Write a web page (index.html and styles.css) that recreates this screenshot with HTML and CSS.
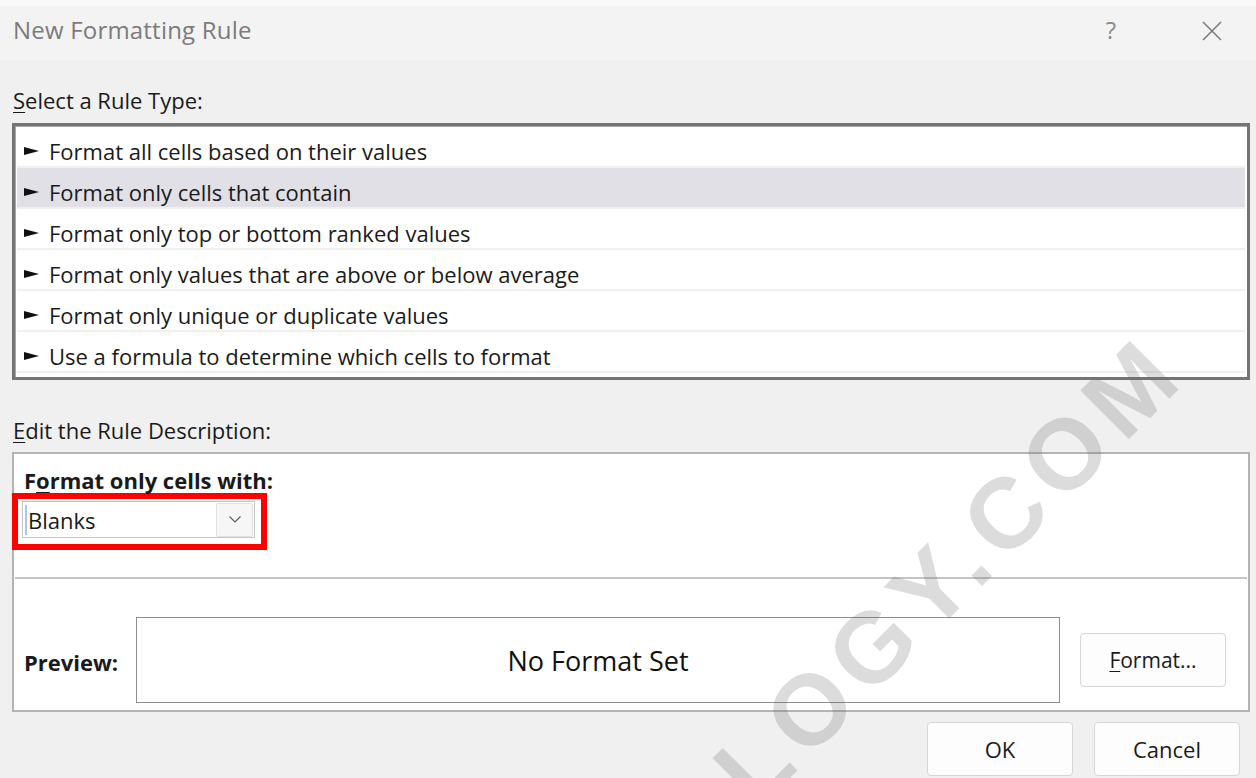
FILE: index.html
```html
<!DOCTYPE html>
<html lang="en">
<head>
<meta charset="utf-8">
<title>New Formatting Rule</title>
<link rel="stylesheet" href="styles.css">
</head>
<body>
<div class="dialog">
  <header class="titlebar">
    <span class="title">New Formatting Rule</span>
    <span class="help">?</span>
    <svg class="close" width="20" height="20" viewBox="0 0 20 20" aria-label="Close">
      <path d="M1 1 L19 19 M19 1 L1 19" stroke="#7d7d7d" stroke-width="1.6" fill="none"/>
    </svg>
  </header>

  <main class="content">
    <div class="section-label"><u>S</u>elect a Rule Type:</div>
    <ul class="rule-list">
      <li class="rule"><svg class="bullet" width="15" height="10" viewBox="0 0 15 10"><polygon points="0,1 15,5 0,9" fill="#111"/></svg><span>Format all cells based on their values</span></li>
      <li class="rule is-selected"><svg class="bullet" width="15" height="10" viewBox="0 0 15 10"><polygon points="0,1 15,5 0,9" fill="#111"/></svg><span>Format only cells that contain</span></li>
      <li class="rule"><svg class="bullet" width="15" height="10" viewBox="0 0 15 10"><polygon points="0,1 15,5 0,9" fill="#111"/></svg><span>Format only top or bottom ranked values</span></li>
      <li class="rule"><svg class="bullet" width="15" height="10" viewBox="0 0 15 10"><polygon points="0,1 15,5 0,9" fill="#111"/></svg><span>Format only values that are above or below average</span></li>
      <li class="rule"><svg class="bullet" width="15" height="10" viewBox="0 0 15 10"><polygon points="0,1 15,5 0,9" fill="#111"/></svg><span>Format only unique or duplicate values</span></li>
      <li class="rule"><svg class="bullet" width="15" height="10" viewBox="0 0 15 10"><polygon points="0,1 15,5 0,9" fill="#111"/></svg><span>Use a formula to determine which cells to format</span></li>
    </ul>

    <div class="section-label section-label--gap"><u>E</u>dit the Rule Description:</div>
    <section class="desc">
      <div class="desc-heading">F<u>o</u>rmat only cells with:</div>
      <div class="highlight">
        <div class="combo">
          <span class="caret"></span>
          <span class="combo-value">Blanks</span>
          <span class="combo-button">
            <svg width="12" height="7" viewBox="0 0 12 7"><polyline points="0.5,0.5 6,6 11.5,0.5" fill="none" stroke="#5a5a5a" stroke-width="1.1"/></svg>
          </span>
        </div>
      </div>
      <div class="separator"></div>
      <div class="preview-row">
        <span class="preview-label">Preview:</span>
        <div class="preview-box">No Format Set</div>
        <button class="btn btn-format" type="button"><u>F</u>ormat...</button>
      </div>
    </section>

    <div class="actions">
      <button class="btn" type="button">OK</button>
      <button class="btn" type="button">Cancel</button>
    </div>
  </main>

  <div class="watermark" aria-hidden="true">LOGY.COM</div>
</div>
</body>
</html>
```

FILE: styles.css
```css
html, body {
  margin: 0;
  padding: 0;
}

body {
  width: 1256px;
  height: 778px;
  overflow: hidden;
  background: #f0f0f0;
  color: #1a1a1a;
  font-family: "Open Sans", "Noto Sans", sans-serif;
  font-stretch: 88%;
  font-size: 22px;
}

.dialog {
  position: relative;
  width: 1256px;
  height: 778px;
  overflow: hidden;
}

/* Title bar */
.titlebar {
  box-sizing: border-box;
  height: 60px;
  border-top: 6px solid #fafafa;
  background: #f3f3f3;
  display: flex;
  align-items: center;
  padding: 0 34px 7px 13px;
}

.title {
  flex: 1;
  font-size: 24px;
  letter-spacing: 0.2px;
  color: #7b7b7b;
}

.help {
  font-size: 24px;
  color: #8a8a8a;
  margin-right: 86px;
}

.close {
  display: block;
  margin-top: 2px;
}

/* Body */
.content {
  padding: 0 6px 0 12px;
}

.section-label {
  line-height: 28px;
  margin-top: 26px;
  padding-left: 1px;
}

.section-label--gap {
  margin-top: 36px;
}

u {
  text-decoration-thickness: 1px;
  text-underline-offset: 3px;
}

/* Rule type list */
.rule-list {
  list-style: none;
  margin: 9px 0 0;
  padding: 1px 2px 4px;
  border: 3px solid #747474;
  box-shadow: inset 1px 1px 0 #a8a8a8;
  background: #fff;
}

.rule {
  box-sizing: border-box;
  height: 41px;
  padding: 8px 0 0 7px;
  border-bottom: 2px solid #f0f0f0;
  display: flex;
  align-items: center;
  gap: 10px;
}

.rule.is-selected {
  background: #e0e0e6;
}

.bullet {
  flex: none;
  display: block;
}

/* Rule description */
.desc {
  box-sizing: border-box;
  height: 260px;
  margin-top: 8px;
  border: 2px solid #b3b3b3;
  background: #fff;
  padding-top: 12px;
}

.desc-heading {
  font-weight: 700;
  line-height: 28px;
  padding-left: 10px;
}

.highlight {
  width: fit-content;
  margin: -1px 0 0 -2px;
  padding: 2px 6px 6px 4px;
  border: 6px solid #ff0000;
}

.combo {
  box-sizing: border-box;
  width: 233px;
  height: 37px;
  border: 1px solid #c6c6c6;
  display: flex;
  align-items: center;
  background: #fff;
}

.caret {
  width: 2px;
  height: 30px;
  margin-left: 2px;
  background: #a9c8ec;
}

.combo-value {
  flex: 1;
  padding-left: 1px;
}

.combo-button {
  box-sizing: border-box;
  width: 37px;
  height: 34px;
  margin-right: 1px;
  border: 1px solid #e1e1e1;
  border-radius: 2px;
  background: #f6f6f6;
  display: flex;
  align-items: center;
  justify-content: center;
}

.separator {
  height: 2px;
  margin: 27px 1px 0;
  background: #c4c4c4;
}

.preview-row {
  display: flex;
  align-items: center;
  margin-top: 38px;
  padding-left: 10px;
}

.preview-label {
  flex: 0 0 112px;
  font-weight: 700;
  padding-top: 4px;
}

.preview-box {
  box-sizing: border-box;
  width: 924px;
  height: 86px;
  border: 1px solid #8e8e8e;
  display: flex;
  align-items: center;
  justify-content: center;
  font-size: 27px;
  color: #111;
}

.btn {
  box-sizing: border-box;
  width: 146px;
  height: 54px;
  border: 1px solid #d6d6d6;
  border-radius: 4px;
  background: #fdfdfd;
  font: inherit;
  color: #1a1a1a;
  padding: 0;
}

.btn-format {
  margin-left: 20px;
  font-size: 21px;
}

.actions {
  display: flex;
  justify-content: flex-end;
  gap: 21px;
  margin-top: 10px;
  padding-right: 10px;
}

/* Site mark drawn across the dialog */
.watermark {
  position: absolute;
  right: 91px;
  top: 303px;
  line-height: 100px;
  font-family: "Liberation Sans", Arial, sans-serif;
  font-stretch: normal;
  font-weight: 700;
  font-size: 100px;
  letter-spacing: 10px;
  color: rgba(110, 110, 110, 0.24);
  white-space: nowrap;
  transform-origin: right center;
  transform: rotate(-45deg);
  pointer-events: none;
}
```
